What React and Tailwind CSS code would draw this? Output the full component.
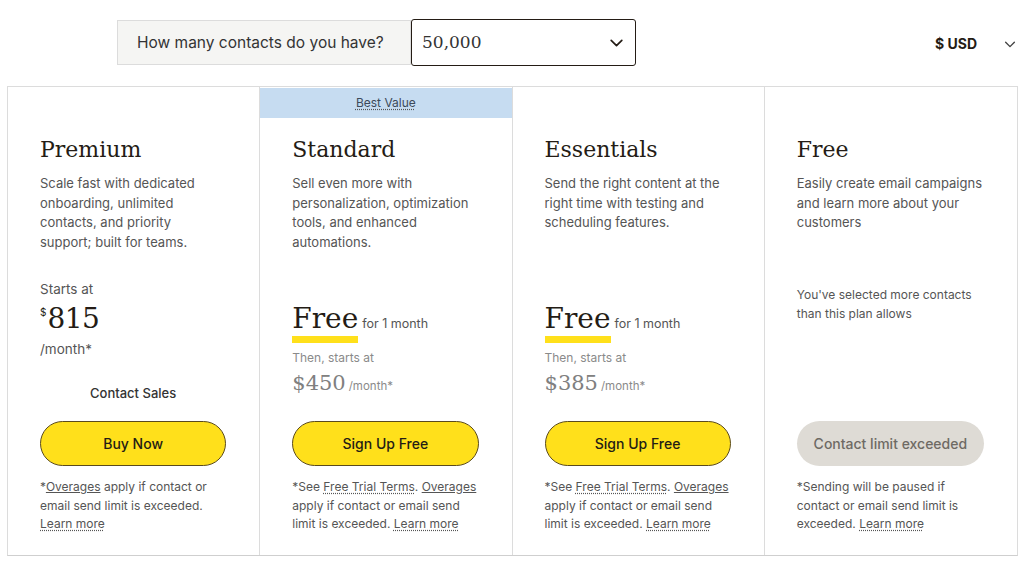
import React from 'react';

const serif = { fontFamily: '"DejaVu Serif", serif' };

const Dotted = ({ children }) => (
  <span className="underline decoration-dotted decoration-[#555] underline-offset-[2px]">{children}</span>
);

const Solid = ({ children }) => (
  <span className="underline decoration-[#555] underline-offset-[1px]">{children}</span>
);

const Chevron = ({ className }) => (
  <svg viewBox="0 0 16 16" className={className} fill="none" stroke="currentColor" strokeWidth="1.6" strokeLinecap="round" strokeLinejoin="round">
    <path d="M3 6l5 5 5-5" />
  </svg>
);

function YellowButton({ children }) {
  return (
    <button className="w-full h-[45px] rounded-full bg-[#ffe01b] border border-[#5a4a1c] text-[14px] font-medium text-[#241c15]">
      {children}
    </button>
  );
}

function TrialPrice({ price }) {
  return (
    <div className="pt-[47px]">
      <div className="flex items-baseline h-[36px]">
        <span className="text-[28px] leading-[36px] text-[#241c15]" style={serif}>Free</span>
        <span className="ml-[4px] text-[12.5px] text-[#555]">for 1 month</span>
      </div>
      <div className="w-[66px] h-[7px] bg-[#ffe01b] mt-[-1px]" />
      <div className="mt-[5px] text-[12px] leading-[20px] text-[#8a8a8a]">Then, starts at</div>
      <div className="flex items-baseline h-[30px]">
        <span className="text-[21px] leading-[30px] text-[#808080]" style={serif}>${price}</span>
        <span className="ml-[3px] text-[11.5px] text-[#8a8a8a]">/month*</span>
      </div>
    </div>
  );
}

function Column({ title, desc, descPad = '', header, children, button, note, last }) {
  return (
    <div className={`flex flex-col ${last ? '' : 'border-r border-[#dcdcdc]'}`}>
      <div className="h-[31px]">
        {header && (
          <div className="h-[30px] mt-[1px] bg-[#c6dcf1] flex items-center justify-center text-[12px] text-[#3c4a5a]">
            <Dotted>{header}</Dotted>
          </div>
        )}
      </div>
      <div className="pl-[32px] pr-[33px]">
        <h2 className="mt-[17px] text-[22px] leading-[30px] text-[#241c15]" style={serif}>{title}</h2>
        <p className={`mt-[9px] h-[80px] text-[13px] leading-[19.7px] text-[#555] ${descPad}`}>{desc}</p>
        <div className="h-[167px]">{children}</div>
        {button}
        <p className="mt-[12px] text-[12px] leading-[18.5px] text-[#555] pb-[21px]">{note}</p>
      </div>
    </div>
  );
}

export default function App() {
  return (
    <div className="w-[1024px] h-[566px] bg-white overflow-hidden" style={{ fontFamily: 'Inter, "Liberation Sans", sans-serif' }}>
      <div className="h-[86px] flex items-start pt-[19px]">
        <div className="ml-[117px] mt-[1px] w-[294px] h-[45px] bg-[#f5f5f3] border border-[#dcdcdc] flex items-center pl-[19px] text-[15.5px] text-[#333]">
          How many contacts do you have?
        </div>
        <div className="w-[225px] h-[47px] border-[1.5px] border-[#241c15] rounded-[3px] flex items-center justify-between pl-[10px] pr-[10px] text-[#333]">
          <span className="text-[17px]" style={serif}>50,000</span>
          <Chevron className="w-[17px] h-[17px] text-[#241c15]" />
        </div>
        <div className="ml-auto mt-[14px] flex items-center mr-[7px]">
          <span className="text-[14px] font-bold text-[#241c15]">$ USD</span>
          <Chevron className="ml-[26px] w-[14px] h-[14px] text-[#444]" />
        </div>
      </div>

      <div className="ml-[7px] w-[1011px] grid grid-cols-4 border border-[#dcdcdc] border-b-[#cfcfcf]">
        <Column
          title="Premium"
          descPad="pr-[6px]"
          desc="Scale fast with dedicated onboarding, unlimited contacts, and priority support; built for teams."
          button={<YellowButton>Buy Now</YellowButton>}
          note={<>*<Solid>Overages</Solid> apply if contact or email send limit is exceeded. <Dotted>Learn more</Dotted></>}
        >
          <div className="pt-[25px]">
            <div className="text-[13.5px] leading-[20px] text-[#555]">Starts at</div>
            <div className="flex items-start h-[40px] text-[#241c15]">
              <span className="text-[10px] mt-[6px] mr-[1px]">$</span>
              <span className="text-[28px] leading-[40px] tracking-[-0.5px]" style={serif}>815</span>
            </div>
            <div className="text-[13.5px] leading-[20px] text-[#555]">/month*</div>
            <div className="mt-[24px] text-center text-[13px] leading-[20px] font-medium text-[#333]">Contact Sales</div>
          </div>
        </Column>
        <Column
          title="Standard"
          header="Best Value"
          desc="Sell even more with personalization, optimization tools, and enhanced automations."
          button={<YellowButton>Sign Up Free</YellowButton>}
          note={<>*See <Dotted>Free Trial Terms</Dotted>. <Solid>Overages</Solid> apply if contact or email send limit is exceeded. <Dotted>Learn more</Dotted></>}
        >
          <TrialPrice price="450" />
        </Column>
        <Column
          title="Essentials"
          desc="Send the right content at the right time with testing and scheduling features."
          button={<YellowButton>Sign Up Free</YellowButton>}
          note={<>*See <Dotted>Free Trial Terms</Dotted>. <Solid>Overages</Solid> apply if contact or email send limit is exceeded. <Dotted>Learn more</Dotted></>}
        >
          <TrialPrice price="385" />
        </Column>
        <Column
          title="Free"
          last
          desc="Easily create email campaigns and learn more about your customers"
          button={
            <button className="w-full h-[45px] rounded-full bg-[#dedbd5] text-[14px] font-medium text-[#6e6a64]">
              Contact limit exceeded
            </button>
          }
          note={<>*Sending will be paused if contact or email send limit is exceeded. <Dotted>Learn more</Dotted></>}
        >
          <div className="pt-[31px] text-[12px] leading-[19px] text-[#555]">
            You've selected more contacts than this plan allows
          </div>
        </Column>
      </div>
    </div>
  );
}
